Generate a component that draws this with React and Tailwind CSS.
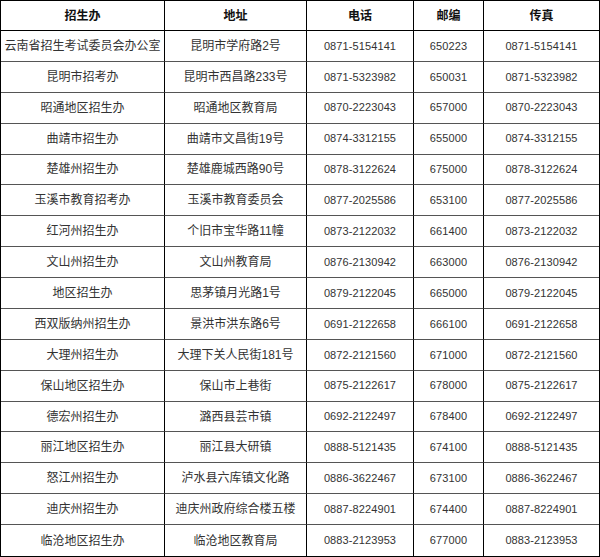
const rows = [
  ['云南省招生考试委员会办公室', '昆明市学府路2号', '0871-5154141', '650223', '0871-5154141'],
  ['昆明市招考办', '昆明市西昌路233号', '0871-5323982', '650031', '0871-5323982'],
  ['昭通地区招生办', '昭通地区教育局', '0870-2223043', '657000', '0870-2223043'],
  ['曲靖市招生办', '曲靖市文昌街19号', '0874-3312155', '655000', '0874-3312155'],
  ['楚雄州招生办', '楚雄鹿城西路90号', '0878-3122624', '675000', '0878-3122624'],
  ['玉溪市教育招考办', '玉溪市教育委员会', '0877-2025586', '653100', '0877-2025586'],
  ['红河州招生办', '个旧市宝华路11幢', '0873-2122032', '661400', '0873-2122032'],
  ['文山州招生办', '文山州教育局', '0876-2130942', '663000', '0876-2130942'],
  ['地区招生办', '思茅镇月光路1号', '0879-2122045', '665000', '0879-2122045'],
  ['西双版纳州招生办', '景洪市洪东路6号', '0691-2122658', '666100', '0691-2122658'],
  ['大理州招生办', '大理下关人民街181号', '0872-2121560', '671000', '0872-2121560'],
  ['保山地区招生办', '保山市上巷街', '0875-2122617', '678000', '0875-2122617'],
  ['德宏州招生办', '潞西县芸市镇', '0692-2122497', '678400', '0692-2122497'],
  ['丽江地区招生办', '丽江县大研镇', '0888-5121435', '674100', '0888-5121435'],
  ['怒江州招生办', '泸水县六库镇文化路', '0886-3622467', '673100', '0886-3622467'],
  ['迪庆州招生办', '迪庆州政府综合楼五楼', '0887-8224901', '674400', '0887-8224901'],
  ['临沧地区招生办', '临沧地区教育局', '0883-2123953', '677000', '0883-2123953'],
];

const headers = ['招生办', '地址', '电话', '邮编', '传真'];

export default function App() {
  return (
    <div className="w-[600px] h-[557px] bg-white font-['Liberation_Sans','Noto_Sans_CJK_SC',sans-serif] text-[#333]">
      <div className="w-[600px] h-[557px] border border-black grid grid-cols-[164px_142px_107px_70px_1fr] grid-rows-[30px_repeat(17,1fr)]">
        {headers.map((h, i) => (
          <div
            key={h}
            className={`flex items-center justify-center border-b border-black text-[12px] font-bold text-[#111] ${i < 4 ? 'border-r' : ''}`}
          >
            {h}
          </div>
        ))}
        {rows.map((r, ri) =>
          r.map((c, ci) => (
            <div
              key={ri + '-' + ci}
              className={`flex items-center justify-center whitespace-nowrap ${ci < 2 ? 'text-[12px]' : 'text-[11px] tracking-[0.1px]'} ${ci < 4 ? 'border-r border-r-black' : ''} ${ri < rows.length - 1 ? 'border-b border-b-[#555]' : ''}`}
            >
              {c}
            </div>
          ))
        )}
      </div>
    </div>
  );
}
